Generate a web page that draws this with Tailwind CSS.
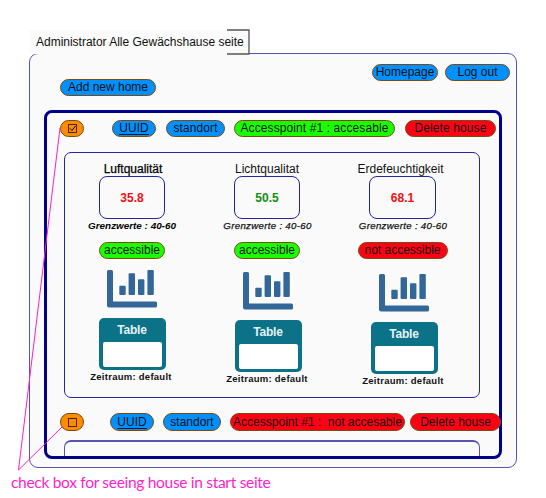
<!DOCTYPE html>
<html lang="de">
<head>
<meta charset="utf-8">
<title>Administrator</title>
<script src="https://cdn.jsdelivr.net/npm/@tailwindcss/browser@4"></script>
</head>
<body class="w-[546px] h-[498px] bg-white overflow-hidden relative text-[#111] text-[12px] font-['Liberation_Sans',Arial,sans-serif] whitespace-nowrap">
<svg width="0" height="0" class="absolute">
  <symbol id="chart" viewBox="0 0 51 38">
    <g fill="#336699">
      <path d="M1.500 0H4.500Q6 0 6 1.500V31.500H48.500Q50 31.500 50 33V36Q50 37.500 48.500 37.500H2Q0 37.500 0 35.500V1.500Q0 0 1.500 0Z"/>
      <rect x="12.300" y="15.700" width="6.400" height="9.300" rx="1"/>
      <rect x="21.600" y="3.200" width="6.400" height="21.800" rx="1"/>
      <rect x="31" y="9.300" width="6.400" height="15.700" rx="1"/>
      <rect x="40.400" y="0" width="6.400" height="25" rx="1"/>
    </g>
  </symbol>
</svg>
<header class="ml-[30px] mt-[30px] w-[219px] h-[24px] bg-[#fafafa] flex items-center pl-[6px] relative">
  <span class="tracking-[-0.01px]">Administrator Alle Gewächshause seite</span>
  <svg class="absolute left-[197px] -top-px" width="23" height="26" fill="none" stroke="#555" stroke-width="1.300"><path d="M0 1H22V25H0"/></svg>
</header>
<main class="ml-[29px] -mt-px w-[488px] h-[415px] rounded-[9px] border-[1.500px] border-[#5555b0] bg-[#fafafa]">
  <div class="flex justify-end gap-[7px] pt-[10px] pr-[6px]">
    <button class="w-[66px] h-[17px] rounded-full border border-[#7a4a10] bg-[#0090ff] leading-[15px]">Homepage</button>
    <button class="w-[65px] h-[17px] rounded-full border border-[#7a4a10] bg-[#0090ff] leading-[15px]">Log out</button>
  </div>
  <button class="block ml-[30px] -mt-[2px] w-[96px] h-[17px] rounded-full border border-[#7a4a10] bg-[#0090ff] leading-[15px]">Add new home</button>
  <section class="ml-[14px] mt-[14px] w-[458px] h-[349px] rounded-[8px] border-[3px] border-[#00008b]">
    <div class="flex pt-[7px] pl-[13px] *:h-[17px] *:rounded-full *:border *:border-[#7a4a10] *:leading-[15px] *:text-center *:shrink-0 *:tracking-[0.1px]">
      <div class="w-[24px] bg-[#ff8c00] flex items-center justify-center"><svg width="9" height="9" fill="none" stroke="#4a2800"><rect x=".5" y=".5" width="8" height="8"/><path d="M2 4.500L4 6.500L7.500 2" stroke="#000"/></svg></div>
      <div class="ml-[28px] w-[44px] bg-[#0090ff]"><span class="underline decoration-1 underline-offset-2">UUID</span></div>
      <div class="ml-[10px] w-[59px] bg-[#0090ff]">standort</div>
      <div class="ml-[9px] w-[161px] bg-[#19ff00]">Accesspoint #1 : accesable</div>
      <div class="ml-[10px] w-[91px] bg-[#ff0015]">Delete house</div>
    </div>
    <div class="ml-[17px] mt-[15px] w-[416px] h-[246px] rounded-[7px] border border-[#2525a0] flex *:w-[136px] *:shrink-0 *:-ml-px *:mr-px">
      <article class="flex flex-col items-center pt-[10px]">
        <h2 class="leading-[13px] ml-[2px] text-black [-webkit-text-stroke:0.25px_black]">Luftqualität</h2>
        <div class="w-[66px] h-[43px] rounded-[8px] border-[1.500px] border-[#2525a0] flex items-center justify-center font-bold text-[#f01010]">35.8</div>
        <p class="text-[9.900px] leading-[14px] font-bold italic text-black">Grenzwerte : 40-60</p>
        <div class="mt-[9px] w-[66px] h-[17px] rounded-full border border-[#7a4a10] bg-[#19ff00] leading-[15px] text-center">accessible</div>
        <svg class="mt-[11px]" width="51" height="38"><use href="#chart"/></svg>
        <div class="mt-[10px] w-[67px] h-[52px] rounded-[5px] bg-[#0c7288] text-center font-bold text-[#e3f1f4] leading-[25px] shrink-0 tracking-[-0.2px]">Table<div class="mx-auto -mt-px w-[59px] h-[25px] rounded-[2px] bg-white"></div></div>
        <p class="text-[9.500px] leading-[13px] font-bold tracking-[0.26px] mr-[2px]">Zeitraum: default</p>
      </article>
      <article class="flex flex-col items-center pt-[10px]">
        <h2 class="leading-[13px] mr-[2px]">Lichtqualitat</h2>
        <div class="mr-[2px] w-[66px] h-[43px] rounded-[8px] border-[1.500px] border-[#2525a0] flex items-center justify-center font-bold text-[#109010]">50.5</div>
        <p class="text-[9.700px] leading-[14px] italic tracking-[0.3px] mr-px [-webkit-text-stroke:0.25px_#111]">Grenzwerte : 40-60</p>
        <div class="mt-[9px] mr-[2px] w-[66px] h-[17px] rounded-full border border-[#7a4a10] bg-[#19ff00] leading-[15px] text-center">accessible</div>
        <svg class="mt-[13px]" width="51" height="38"><use href="#chart"/></svg>
        <div class="mt-[10px] w-[67px] h-[52px] rounded-[5px] bg-[#0c7288] text-center font-bold text-[#e3f1f4] leading-[25px] shrink-0 tracking-[-0.2px]">Table<div class="mx-auto -mt-px w-[59px] h-[25px] rounded-[2px] bg-white"></div></div>
        <p class="text-[9.500px] leading-[13px] font-bold tracking-[0.26px] mr-[2px]">Zeitraum: default</p>
      </article>
      <article class="flex flex-col items-center pt-[10px]">
        <h2 class="leading-[13px] mr-[7px]">Erdefeuchtigkeit</h2>
        <div class="mr-[3px] w-[67px] h-[43px] rounded-[8px] border-[1.500px] border-[#2525a0] flex items-center justify-center font-bold text-[#f01010]">68.1</div>
        <p class="mr-[2px] text-[9.700px] leading-[14px] italic tracking-[0.3px] [-webkit-text-stroke:0.25px_#111]">Grenzwerte : 40-60</p>
        <div class="mt-[9px] mr-[3px] w-[90px] h-[17px] rounded-full border border-[#7a4a10] bg-[#ff0015] leading-[15px] text-center">not accessible</div>
        <svg class="mt-[15px]" width="51" height="38"><use href="#chart"/></svg>
        <div class="mt-[10px] w-[67px] h-[52px] rounded-[5px] bg-[#0c7288] text-center font-bold text-[#e3f1f4] leading-[25px] shrink-0 tracking-[-0.2px]">Table<div class="mx-auto -mt-px w-[59px] h-[25px] rounded-[2px] bg-white"></div></div>
        <p class="text-[9.500px] leading-[13px] font-bold tracking-[0.26px] mr-[2px]">Zeitraum: default</p>
      </article>
    </div>
    <div class="flex mt-[15px] pl-[13px] *:h-[18px] *:rounded-full *:border *:border-[#7a4a10] *:leading-[16px] *:text-center *:shrink-0">
      <div class="w-[24px] bg-[#ff8c00] flex items-center justify-center"><svg width="9" height="9" fill="none" stroke="#4a2800"><rect x=".5" y=".5" width="8" height="8"/></svg></div>
      <div class="ml-[26px] w-[44px] bg-[#0090ff]"><span class="underline decoration-1 underline-offset-2">UUID</span></div>
      <div class="ml-[9px] w-[58px] bg-[#0090ff]">standort</div>
      <div class="ml-[9px] w-[175px] bg-[#ff0015]">Accesspoint #1 :&nbsp; not accesable</div>
      <div class="ml-[5px] w-[91px] bg-[#ff0015]">Delete house</div>
    </div>
    <div class="ml-[17px] mt-[9px] w-[416px] h-[16px] rounded-t-[7px] border-t-2 border-x border-[#5555b0]"></div>
  </section>
</main>
<footer class="ml-[11px] mt-[4px] text-[15.500px] tracking-[-0.3px] leading-[20px] text-[#ff1ec8] font-[Lato,sans-serif]">check box for seeing house in start seite</footer>
<svg class="absolute left-0 top-0 pointer-events-none" width="546" height="498" fill="none" stroke="#ff1ec8"><path d="M60 128L18.500 470L62 427"/></svg>
</body>
</html>
